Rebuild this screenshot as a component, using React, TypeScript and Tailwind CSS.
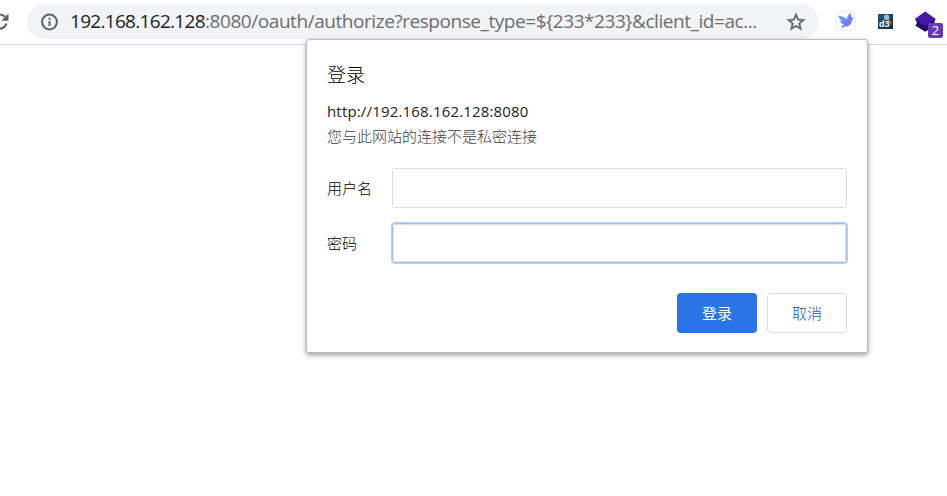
const LATIN = "font-['Open_Sans','Noto_Sans_CJK_SC',sans-serif]";
const CJK = "font-['Noto_Sans_CJK_SC',sans-serif] font-light";

function ReloadIcon() {
  return (
    <svg className="-ml-3.5 h-[17px] w-[23px] shrink-0" viewBox="0 0 23 17" fill="none">
      <path d="M19 3.7A7 7 0 1 0 20.6 10.5" stroke="#5f6368" strokeWidth="2.2" />
      <path d="M22.5 .5v7.2h-7.2z" fill="#5f6368" />
    </svg>
  );
}

function InfoIcon() {
  return (
    <svg className="-ml-px h-[18px] w-[18px] shrink-0" viewBox="0 0 18 18" fill="none">
      <circle cx="9.5" cy="9" r="7.4" stroke="#5f6368" strokeWidth="2" />
      <path d="M9.5 8v5M9.5 4.8v1.9" stroke="#5f6368" strokeWidth="2" />
    </svg>
  );
}

function StarIcon() {
  return (
    <svg className="h-[22px] w-[22px] shrink-0" viewBox="0 0 24 24" fill="#5f6368" stroke="#5f6368" strokeWidth=".4">
      <path d="M22 9.24l-7.19-.62L12 2 9.19 8.63 2 9.24l5.46 4.73L5.82 21 12 17.27 18.18 21l-1.63-7.03L22 9.24zM12 15.4l-3.76 2.27 1-4.28-3.32-2.88 4.38-.38L12 6.1l1.71 4.04 4.38.38-3.32 2.88 1 4.28L12 15.4z" />
    </svg>
  );
}

function BirdIcon() {
  return (
    <svg className="h-5 w-5 shrink-0" viewBox="0 0 20 20">
      <defs>
        <linearGradient id="bird" x1="0" y1="0" x2="1" y2="1">
          <stop offset="0" stopColor="#62b0ff" />
          <stop offset=".5" stopColor="#6c86f4" />
          <stop offset="1" stopColor="#9a55ee" />
        </linearGradient>
      </defs>
      <rect x=".5" y=".5" width="19" height="19" rx="2.5" fill="#fbfbff" stroke="#eceef9" />
      <path d="M2.2 4.8C5.3 5.2 8.4 5.7 10.6 8.6C10.9 5.6 12.5 3 15.2 1.8C14.5 3.8 14.8 5.4 15.7 6.4L18.2 6.8L16.2 8.5C15.9 12.7 13.3 15.8 9.5 15.6C7.8 15.6 6.4 16.8 5.2 17.7C5.4 15.8 6.5 14.2 8 13.2C5.6 12.9 4.1 11.6 3.7 10.1L6.2 10.2C4.1 9 2.7 7 2.2 4.8Z" fill="url(#bird)" />
    </svg>
  );
}

function D3Icon() {
  return (
    <div className="relative h-[15px] w-[15px] shrink-0 overflow-hidden bg-linear-to-br from-[#26587c] to-[#102d43]">
      <svg className="absolute inset-0 h-[15px] w-[15px]" viewBox="0 0 15 15" fill="none">
        <path d="M10 4.8l3.2 5.4" stroke="#b86330" strokeWidth="1.7" />
        <circle cx="8.6" cy="3.3" r="2.4" fill="#8fc3da" stroke="#b4cfdb" strokeWidth=".7" />
      </svg>
      <span className="absolute top-[6px] left-[1px] font-['Liberation_Sans',sans-serif] text-[9px] leading-[9px] font-bold text-white">d3</span>
    </div>
  );
}

function LayersIcon() {
  return (
    <div className="relative h-[28px] w-[28px] shrink-0">
      <svg className="absolute top-0 left-0 h-[22px] w-[22px]" viewBox="0 0 22 22">
        <path d="M0 7.8L2 12 .2 14.6 10 20.7 20.5 15 19 12.5 20.5 7.8Z" fill="#200d68" />
        <path d="M10.2.4L20.5 7.8 10.2 15.2 0 7.8Z" fill="#4619ab" />
      </svg>
      <span className="absolute top-[12px] left-[13px] flex h-[15px] w-[15px] items-center justify-center rounded-[2px] bg-[#673ab7] font-['Open_Sans',sans-serif] text-[13px] leading-none text-white">2</span>
    </div>
  );
}

function Toolbar() {
  return (
    <header className="flex h-[45px] items-start border-b border-[#d7d9dc] bg-white pt-1">
      <div className="flex h-[35px] w-[27px] shrink-0 items-center"><ReloadIcon /></div>
      <div className="flex h-[35px] w-[792px] shrink-0 items-center rounded-full bg-[#f1f3f4] pl-3.5">
        <InfoIcon />
        <div className={`mb-px ml-[12px] flex w-[715px] items-center text-[19px] leading-[26px] whitespace-nowrap ${LATIN}`}>
          <span className="w-[135px] tracking-[-0.7px] text-[#202124]">192.168.162.128</span>
          <span className="tracking-[-0.44px] text-[#6b6e72]">{":8080/oauth/authorize?response_type=${233*233}&client_id=ac..."}</span>
        </div>
        <StarIcon />
      </div>
      <div className="flex items-start pl-[17px]">
        <div className="pt-[7px]"><BirdIcon /></div>
        <div className="pt-[10px] pl-[22px]"><D3Icon /></div>
        <div className="pt-[7px] pl-[22px]"><LayersIcon /></div>
      </div>
    </header>
  );
}

function LoginDialog() {
  return (
    <section className={`absolute top-[39px] left-[306px] flex h-[314px] w-[562px] flex-col rounded-[3px] border border-[#bdbdbd] bg-white pr-5 pl-5 text-[15px] text-black shadow-[0_2px_5px_rgba(0,0,0,0.4)] ${CJK}`}>
      <h1 className="mt-5 text-[19px] leading-7 font-light">登录</h1>
      <p className={`mt-[11px] text-[15px] leading-6 font-normal tracking-[0.17px] text-[#202124] ${LATIN}`}>http://192.168.162.128:8080</p>
      <p className="mt-px leading-6 text-[#3c4043]">您与此网站的连接不是私密连接</p>
      <form className="mt-5 flex flex-col">
        <label className="flex items-center">
          <span className="w-[65px]">用户名</span>
          <input type="text" className="h-10 w-[455px] rounded-[3px] border border-[#dddddd] outline-none" />
        </label>
        <label className="mt-[15px] flex items-center">
          <span className="w-[65px]">密码</span>
          <input type="password" className="h-10 w-[455px] rounded-[3px] border border-[#a3c0ef] shadow-[0_0_0_1px_#b9d0f4,inset_0_0_0_1px_#d6e3f9] outline-none" />
        </label>
        <div className="mt-[30px] flex justify-end gap-2.5">
          <button type="button" className="h-10 w-20 rounded-[4px] bg-[#2974e6] font-normal text-white">登录</button>
          <button type="button" className="h-10 w-20 rounded-[4px] border border-[#dadce0] text-[#0d55cf]">取消</button>
        </div>
      </form>
    </section>
  );
}

export default function App() {
  return (
    <main className="relative h-[496px] w-[947px] overflow-hidden bg-white">
      <Toolbar />
      <LoginDialog />
    </main>
  );
}
